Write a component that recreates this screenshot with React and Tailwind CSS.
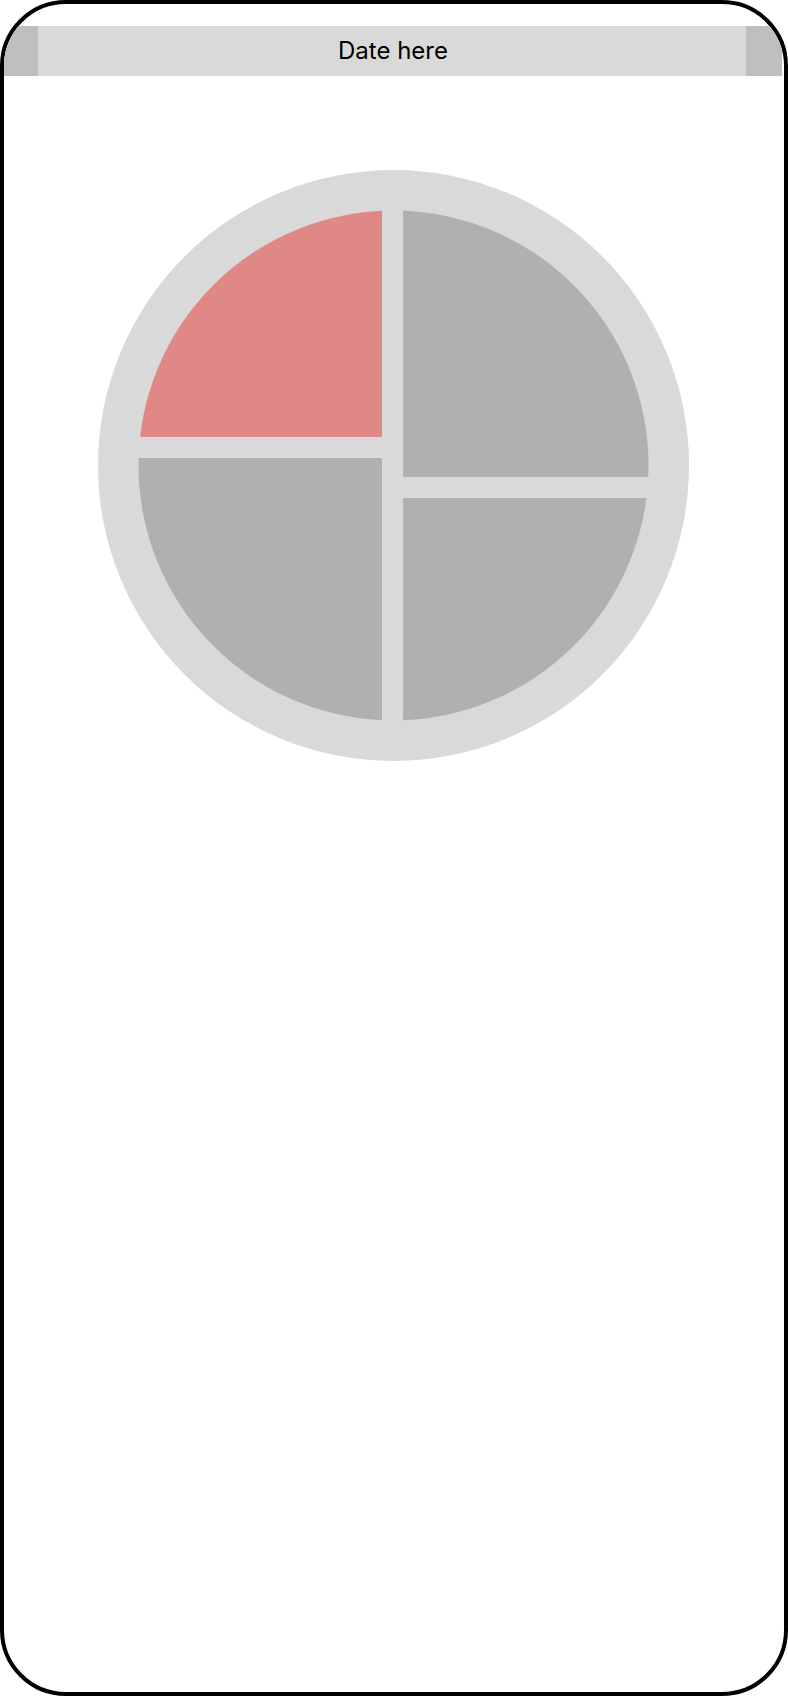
import React from "react";

const quarters = [
  { x: 0, y: 0, w: 284, h: 267, fill: "#e08886" },
  { x: 305, y: 0, w: 286, h: 307, fill: "#b0b0b0" },
  { x: 0, y: 288, w: 284, h: 303, fill: "#b0b0b0" },
  { x: 305, y: 328, w: 286, h: 263, fill: "#b0b0b0" },
];

const PieChart = () => (
  <svg width="591" height="591" viewBox="0 0 591 591" className="block">
    <defs>
      <clipPath id="inner">
        <circle cx="295.5" cy="295.5" r="255" />
      </clipPath>
    </defs>
    <circle cx="295.5" cy="295.5" r="295.5" fill="#d9d9d9" />
    <g clipPath="url(#inner)">
      {quarters.map((q, i) => (
        <rect key={i} x={q.x} y={q.y} width={q.w} height={q.h} fill={q.fill} />
      ))}
    </g>
  </svg>
);

const App = () => {
  return (
    <div className="w-[788px] h-[1696px] bg-white">
      <div className="w-full h-full border-4 border-black rounded-[66px] overflow-hidden bg-white flex flex-col">
        {/* top bar */}
        <div className="mt-[22px] mr-[2px] h-[50px] flex bg-[#d9d9d9]">
          <div className="w-[34px] bg-[#bfbfbf]" />
          <div className="flex-1 flex items-center justify-center pl-[2px] text-[24px] text-black font-['Inter',sans-serif]">
            Date here
          </div>
          <div className="w-[36px] bg-[#bfbfbf]" />
        </div>

        {/* chart */}
        <div className="mt-[94px] ml-[94px]">
          <PieChart />
        </div>
      </div>
    </div>
  );
};

export default App;
